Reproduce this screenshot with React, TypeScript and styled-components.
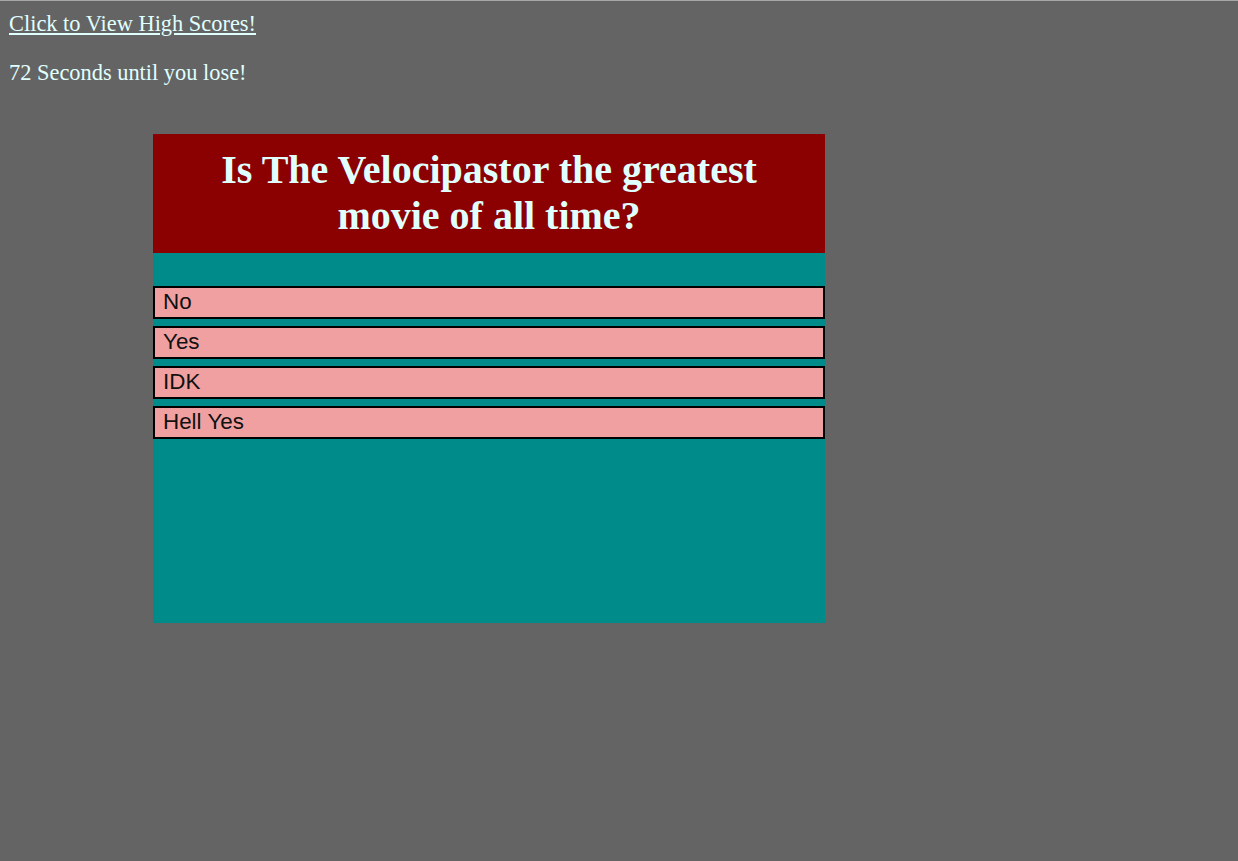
import React from "react";
import styled, { createGlobalStyle } from "styled-components";

const Global = createGlobalStyle`
  html {
    background: #646464;
    border-top: 1px solid #a6a6a6;
  }
  body {
    margin: 10px 8px 8px 9px;
    background: #646464;
    font-family: "Liberation Serif", "Times New Roman", serif;
    color: #e0ffff;
  }
`;

const Page = styled.div`
  display: flex;
  flex-direction: column;
`;

const ScoresLink = styled.a`
  font-size: 22.4px;
  color: #e0ffff;
  text-decoration: underline;
  align-self: flex-start;
  line-height: 1.15;
`;

const Timer = styled.p`
  font-size: 22.4px;
  margin: 23px 0 0;
  line-height: 1.15;
`;

const Card = styled.div`
  margin: 48px 0 0 144px;
  width: 672px;
  display: flex;
  flex-direction: column;
`;

const Header = styled.div`
  background: #8b0000;
  height: 119px;
  box-sizing: border-box;
  padding: 13px 60px 0;
  display: flex;
  justify-content: center;
`;

const Title = styled.h1`
  margin: 0;
  font-size: 40px;
  line-height: 46px;
  font-weight: bold;
  text-align: center;
  color: #e0ffff;
`;

const Body = styled.div`
  background: #008b8b;
  height: 370px;
  box-sizing: border-box;
  padding-top: 33px;
  display: flex;
  flex-direction: column;
  gap: 7px;
`;

const Choice = styled.button`
  display: block;
  width: 100%;
  box-sizing: border-box;
  background: #f0a0a0;
  border: 2px solid #000;
  padding: 0 8px 2px;
  margin: 0;
  text-align: left;
  font-family: "Liberation Sans", Arial, sans-serif;
  font-size: 22.4px;
  line-height: 27px;
  color: #111;
  cursor: pointer;
`;

const choices = ["No", "Yes", "IDK", "Hell Yes"];

export default function App() {
  return (
    <Page>
      <Global />
      <ScoresLink href="#">Click to View High Scores!</ScoresLink>
      <Timer>72 Seconds until you lose!</Timer>
      <Card>
        <Header>
          <Title>Is The Velocipastor the greatest movie of all time?</Title>
        </Header>
        <Body>
          {choices.map((c) => (
            <Choice key={c}>{c}</Choice>
          ))}
        </Body>
      </Card>
    </Page>
  );
}
